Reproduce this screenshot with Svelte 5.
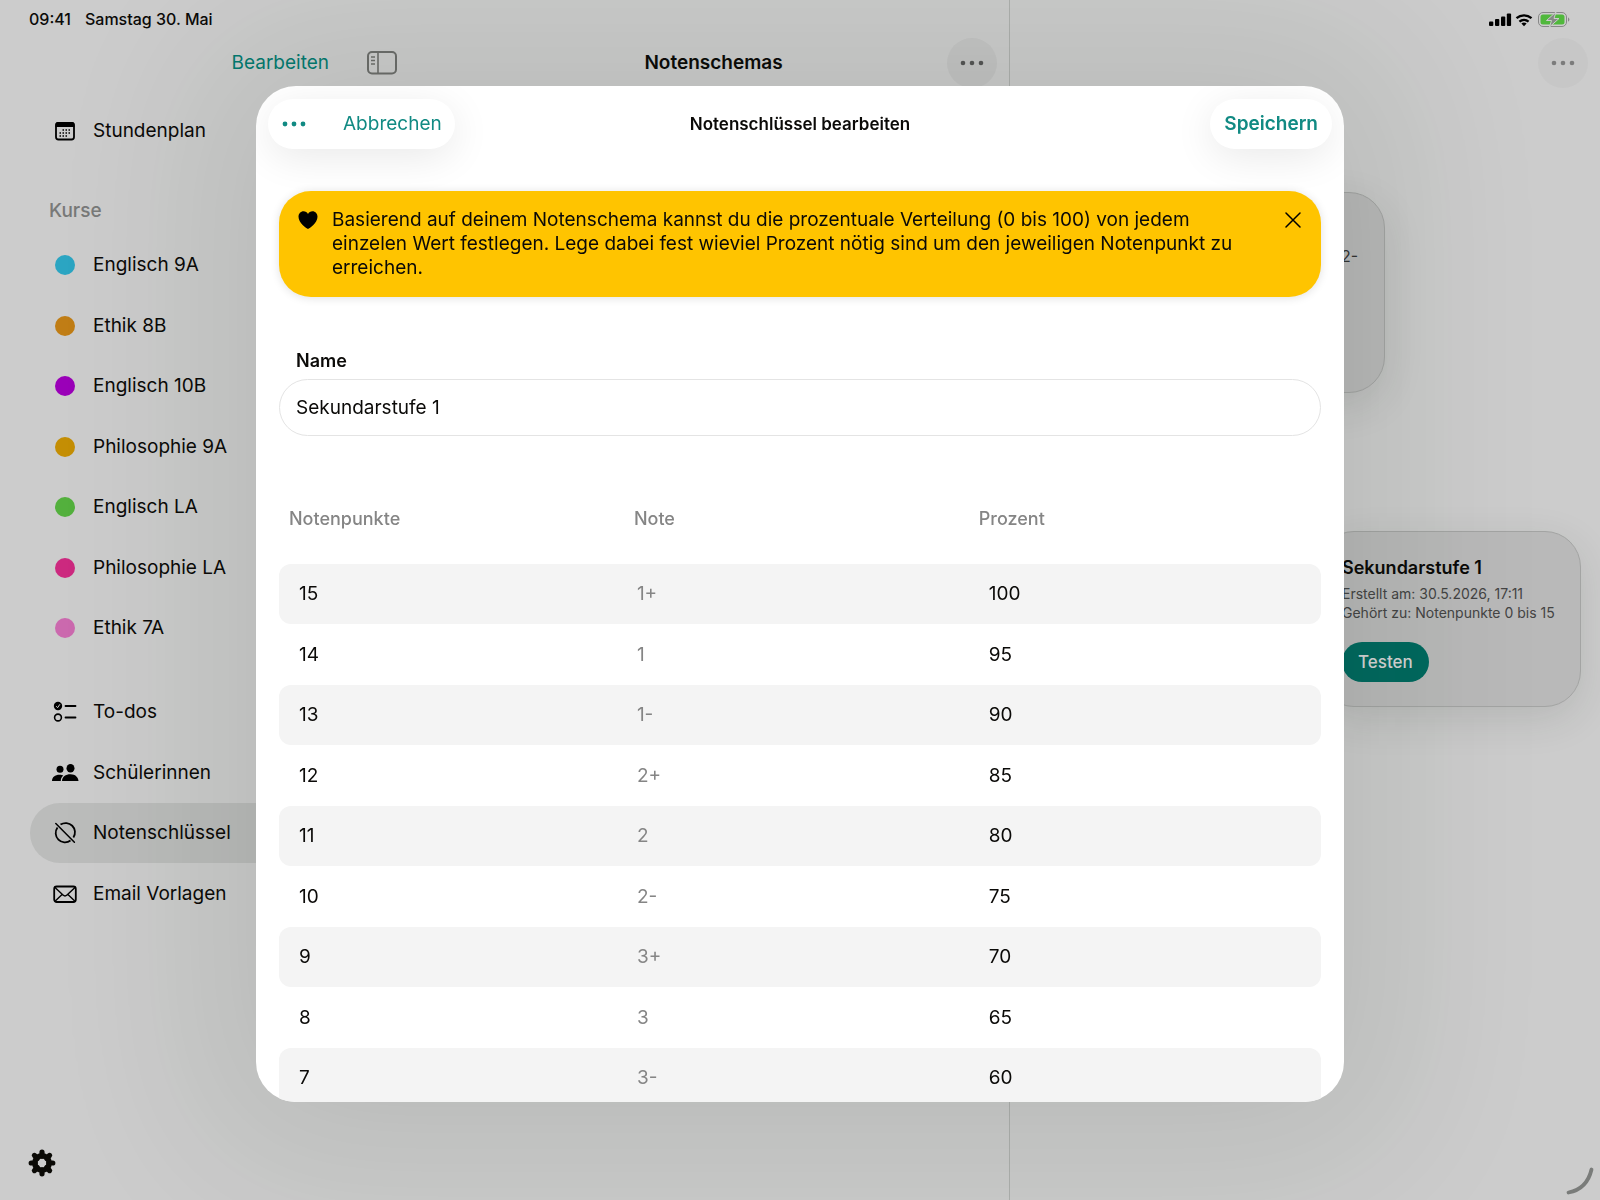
<script>
  let name = "Sekundarstufe 1";
  let showHint = true;
  let selected = "Notenschlüssel";

  const courses = [
    { title: "Englisch 9A", color: "#2ba5c2" },
    { title: "Ethik 8B", color: "#c07d15" },
    { title: "Englisch 10B", color: "#9a00b8" },
    { title: "Philosophie 9A", color: "#c48e04" },
    { title: "Englisch LA", color: "#53b03d" },
    { title: "Philosophie LA", color: "#cc297f" },
    { title: "Ethik 7A", color: "#cb69ae" },
  ];

  const links = [
    { title: "To-dos", icon: "todo" },
    { title: "Schülerinnen", icon: "people" },
    { title: "Notenschlüssel", icon: "key" },
    { title: "Email Vorlagen", icon: "mail" },
  ];

  const grades = [
    { points: 15, grade: "1+", percent: 100 },
    { points: 14, grade: "1", percent: 95 },
    { points: 13, grade: "1-", percent: 90 },
    { points: 12, grade: "2+", percent: 85 },
    { points: 11, grade: "2", percent: 80 },
    { points: 10, grade: "2-", percent: 75 },
    { points: 9, grade: "3+", percent: 70 },
    { points: 8, grade: "3", percent: 65 },
    { points: 7, grade: "3-", percent: 60 },
  ];
</script>

<div class="screen">
  <div class="status">
    <span>09:41</span>
    <span>Samstag 30. Mai</span>
    <svg class="status-icons" width="84" height="18" viewBox="0 0 84 18">
      <rect x="1" y="11.500" width="4.300" height="4.500" rx="1" />
      <rect x="7" y="9" width="4.300" height="7" rx="1" />
      <rect x="13" y="6.500" width="4.300" height="9.500" rx="1" />
      <rect x="18.800" y="3.500" width="4.300" height="12.500" rx="1" />
      <path
        d="M28.500 8.200a11.500 11.500 0 0 1 15 0M31.400 11.600a7.200 7.200 0 0 1 9.200 0"
        fill="none"
        stroke="#000"
        stroke-width="2.300"
      />
      <path d="M36 16.300l-2.600-2.700a4 4 0 0 1 5.200 0z" />
      <rect
        x="50.500"
        y="2.500"
        width="28"
        height="14"
        rx="4.500"
        fill="none"
        stroke="#878787"
      />
      <rect x="52.500" y="4.500" width="24" height="10" rx="2.500" fill="#50b83c" />
      <path d="M80.300 7.200q2 2.300 0 4.600z" fill="#666" />
      <path
        d="M68 2l-9.500 8.500h5l-2 6.500 9.500-8.500h-5z"
        fill="#858a85"
        stroke="#ccc"
        stroke-width="1"
      />
    </svg>
  </div>

  <aside class="sidebar">
    <div class="sidebar-top">
      <button class="text-btn">Bearbeiten</button>
      <button class="icon-btn" aria-label="Seitenleiste">
        <svg width="30" height="24" viewBox="0 0 30 24" fill="none" stroke="#6c6d6b">
          <rect x="1" y="1" width="28" height="21.500" rx="4" stroke-width="2" />
          <path d="M11 1v21" stroke-width="1.600" />
          <path d="M4 6h4M4 9.500h4M4 13h4" stroke-width="1.500" />
        </svg>
      </button>
    </div>
    <nav>
      <ul>
        <li>
          <a href="#stundenplan">
            <svg class="icon" viewBox="0 0 24 24">
              <rect
                x="3"
                y="4"
                width="18"
                height="16.500"
                rx="2.500"
                fill="none"
                stroke="#000"
                stroke-width="1.800"
              />
              <path d="M2.500 8V5.500a2.500 2.500 0 0 1 2.500-2.500h14a2.500 2.500 0 0 1 2.500 2.500V8z" />
              <path
                d="M9.500 11h9M6.500 14h12M6.500 17h9"
                stroke="#000"
                stroke-width="1.500"
                stroke-dasharray="1.500 1.500"
              />
            </svg>
            Stundenplan
          </a>
        </li>
      </ul>
      <h2>Kurse</h2>
      <ul>
        {#each courses as course}
          <li>
            <a href="#kurse">
              <span class="icon">
                <span class="dot" style="background: {course.color}"></span>
              </span>
              {course.title}
            </a>
          </li>
        {/each}
      </ul>
      <ul class="links">
        {#each links as link}
          <li>
            <a
              href="#bereich"
              class={link.title == selected ? "active" : ""}
              on:click={() => (selected = link.title)}
            >
              {#if link.icon == "todo"}
                <svg class="icon" viewBox="0 0 24 24" fill="none" stroke="#000">
                  <circle cx="5" cy="6" r="4.200" fill="#000" stroke="none" />
                  <path d="M3.200 6.200l1.400 1.500 2.300-3.400" stroke="#ccc" />
                  <circle cx="5" cy="17.500" r="3.400" stroke-width="1.600" />
                  <path d="M12.500 6h10M12.500 17.500h10" stroke-width="1.800" stroke-linecap="round" />
                </svg>
              {:else if link.icon == "people"}
                <svg class="icon people" viewBox="0 0 28 24">
                  <circle cx="9" cy="8.300" r="3.500" />
                  <path d="M1 20c0-4 3-6.300 7.500-6.300 1.700 0 2.800.300 3.800.800-1.800 1.400-2.500 3.200-2.500 5.500z" />
                  <ellipse cx="19.500" cy="7.300" rx="4" ry="4.300" />
                  <path d="M11 20c0-4.200 3.600-6.800 8.500-6.800s7.500 2.800 8 6.800z" />
                </svg>
              {:else if link.icon == "key"}
                <svg class="icon" viewBox="0 0 24 24" fill="none" stroke="#000" stroke-width="1.800">
                  <path d="M7.500 3.600A9.300 9.300 0 0 1 20.400 16.500M17.500 19.500A9.300 9.300 0 0 1 4.500 6.500" />
                  <path d="M2.800 2.500l18.600 18.800" stroke-width="1.500" stroke-linecap="round" />
                </svg>
              {:else}
                <svg class="icon" viewBox="0 0 24 24" fill="none" stroke="#000" stroke-width="1.800">
                  <rect x="1.200" y="4.500" width="21.600" height="15.500" rx="2.500" />
                  <path
                    d="M2 5.500l8 7.500q2 1.800 4 0l8-7.500M2 19.300l6.800-6.500M22 19.300l-6.800-6.500"
                    stroke-width="1.400"
                  />
                </svg>
              {/if}
              {link.title}
            </a>
          </li>
        {/each}
      </ul>
    </nav>
    <button class="icon-btn gear" aria-label="Einstellungen">
      <svg width="28" height="28" viewBox="0 0 28 28">
        <g stroke="#0b0a06" stroke-width="5.200" stroke-linecap="round">
          <path d="M14 3.200v4M14 20.800v4M3.200 14h4M20.800 14h4" />
          <path d="M6.400 6.400l3 3M18.600 18.600l3 3M21.600 6.400l-3 3M9.400 18.600l-3 3" />
        </g>
        <circle cx="14" cy="14" r="7.200" fill="none" stroke="#0b0a06" stroke-width="5.500" />
      </svg>
    </button>
  </aside>

  <section class="schemas">
    <h1>Notenschemas</h1>
    <button class="more" aria-label="Mehr">
      <svg width="26" height="8" viewBox="0 0 26 8">
        <circle cx="4" cy="4" r="2.300" />
        <circle cx="13" cy="4" r="2.300" />
        <circle cx="22" cy="4" r="2.300" />
      </svg>
    </button>
  </section>

  <section class="detail">
    <button class="more more-dim" aria-label="Mehr">
      <svg width="26" height="8" viewBox="0 0 26 8">
        <circle cx="4" cy="4" r="2.300" />
        <circle cx="13" cy="4" r="2.300" />
        <circle cx="22" cy="4" r="2.300" />
      </svg>
    </button>
    <article class="card scheme-card">2-</article>
    <article class="card key-card">
      <h3>Sekundarstufe 1</h3>
      <p>Erstellt am: 30.5.2026, 17:11</p>
      <p>Gehört zu: Notenpunkte 0 bis 15</p>
      <button class="test-btn">Testen</button>
    </article>
  </section>

  <svg class="corner" width="28" height="28" viewBox="0 0 28 28">
    <path
      d="M2.500 25.500Q21 22 25.500 2.500"
      fill="none"
      stroke="#7a7c7a"
      stroke-width="3.800"
      stroke-linecap="round"
    />
  </svg>
</div>

<div class="overlay">
  <div class="modal" role="dialog" aria-labelledby="modal-title">
    <header>
      <div class="pill">
        <button class="icon-btn dots" aria-label="Mehr">
          <svg width="26" height="8" viewBox="0 0 26 8">
            <circle cx="4" cy="4" r="2.400" />
            <circle cx="13" cy="4" r="2.400" />
            <circle cx="22" cy="4" r="2.400" />
          </svg>
        </button>
        <button class="text-btn">Abbrechen</button>
      </div>
      <h2 id="modal-title">Notenschlüssel bearbeiten</h2>
      <div class="pill pill-right">
        <button class="text-btn save">Speichern</button>
      </div>
    </header>

    {#if showHint}
      <div class="hint">
        <svg width="20" height="20" viewBox="0 0 20 20">
          <path
            d="M10 19C8.500 18.500 .500 13 .500 6.800.500 3.500 2.700 1.200 5.500 1.200c2 0 3.600 1 4.500 2.700.900-1.700 2.500-2.700 4.500-2.700 2.800 0 5 2.300 5 5.600C19.500 13 11.500 18.500 10 19z"
          />
        </svg>
        <p>
          Basierend auf deinem Notenschema kannst du die prozentuale Verteilung
          (0 bis 100) von jedem einzelen Wert festlegen. Lege dabei fest wieviel
          Prozent nötig sind um den jeweiligen Notenpunkt zu erreichen.
        </p>
        <button
          class="icon-btn"
          aria-label="Schließen"
          on:click={() => (showHint = false)}
        >
          <svg width="16" height="16" viewBox="0 0 16 16">
            <path
              d="M1 1l14 14M15 1L1 15"
              stroke="#000"
              stroke-width="1.500"
              stroke-linecap="round"
            />
          </svg>
        </button>
      </div>
    {/if}

    <div class="field">
      <label for="name">Name</label>
      <input id="name" type="text" bind:value={name} />
    </div>

    <table>
      <thead>
        <tr>
          <th>Notenpunkte</th>
          <th>Note</th>
          <th>Prozent</th>
        </tr>
      </thead>
      <tbody>
        {#each grades as row}
          <tr>
            <td>{row.points}</td>
            <td class="grade">{row.grade}</td>
            <td>{row.percent}</td>
          </tr>
        {/each}
      </tbody>
    </table>
  </div>
</div>

<style>
  :global(body) {
    margin: 0;
    background: #ccc;
    color: #0b0a08;
    font-family: Inter, "Liberation Sans", sans-serif;
    font-size: 19px;
    line-height: 24px;
  }
  h1,
  h2,
  h3,
  p,
  ul {
    margin: 0;
    padding: 0;
  }
  ul {
    list-style: none;
  }
  button {
    padding: 0;
    border: none;
    background: none;
    font: inherit;
    cursor: pointer;
  }
  svg {
    display: block;
  }
  .screen {
    position: relative;
    display: grid;
    grid-template-columns: 418px 1fr 590px;
    min-height: 100vh;
    overflow: hidden;
  }
  .status {
    position: absolute;
    top: 7px;
    left: 29px;
    right: 28px;
    display: flex;
    align-items: center;
    gap: 14px;
    font-size: 16px;
    font-weight: 500;
  }
  .status-icons {
    margin-left: auto;
  }
  .text-btn {
    color: #047a70;
  }
  .sidebar {
    display: flex;
    flex-direction: column;
    box-sizing: border-box;
    margin: 38px 5px 12px 12px;
    padding-bottom: 11px;
  }
  .sidebar-top {
    display: flex;
    align-items: center;
    justify-content: flex-end;
    gap: 38px;
    height: 50px;
    padding-right: 16px;
    margin-bottom: 13px;
  }
  nav {
    padding-left: 18px;
  }
  nav a {
    display: flex;
    align-items: center;
    gap: 16px;
    height: 60px;
    padding-left: 23px;
    border-radius: 30px;
    color: inherit;
    text-decoration: none;
  }
  nav li:nth-child(even) a {
    height: 61px;
  }
  nav a.active {
    background: rgba(40, 50, 40, 0.1);
  }
  nav h2 {
    margin: 38px 0 12px 19px;
    color: #787978;
    font-size: 19px;
    font-weight: 500;
  }
  .icon {
    display: flex;
    align-items: center;
    justify-content: center;
    width: 24px;
    height: 24px;
  }
  .people {
    width: 28px;
    margin: 0 -2px;
  }
  .dot {
    width: 20px;
    height: 20px;
    border-radius: 50%;
  }
  .links {
    margin-top: 24px;
  }
  .gear {
    align-self: flex-start;
    margin: auto 0 0 16px;
  }
  .schemas {
    display: grid;
    grid-template-columns: 1fr auto 1fr;
    align-items: center;
    align-content: start;
    padding: 38px 12px 0;
    border-right: 1px solid #aeb0ae;
  }
  h1 {
    grid-column: 2;
    font-size: 19px;
    font-weight: 600;
  }
  .more {
    display: flex;
    align-items: center;
    justify-content: center;
    justify-self: end;
    width: 50px;
    height: 50px;
    border-radius: 50%;
    background: rgba(60, 60, 50, 0.05);
    fill: #555;
  }
  .more-dim {
    background: rgba(60, 60, 50, 0.03);
    fill: #7c7c7c;
  }
  .detail {
    display: flex;
    flex-direction: column;
    align-items: flex-end;
    padding: 38px 12px 0;
  }
  .card {
    box-sizing: border-box;
    border: 1px solid #a3a4a3;
    border-radius: 36px;
    background: #b9b9b9;
    box-shadow: 0 12px 40px rgba(30, 40, 30, 0.12);
  }
  .scheme-card {
    width: 262px;
    height: 201px;
    margin: 104px 203px 0 0;
    padding: 51px 26px;
    font-size: 16px;
    text-align: right;
    color: #333;
  }
  .key-card {
    width: 263px;
    margin: 138px 7px 0 0;
    padding: 24px 23px;
    font-size: 14px;
    line-height: 19px;
    color: #444;
  }
  .key-card h3 {
    margin-bottom: 4px;
    color: #0b0a08;
    font-size: 18px;
    font-weight: 600;
    line-height: 24px;
  }
  .key-card p {
    white-space: nowrap;
  }
  .test-btn {
    height: 40px;
    margin-top: 20px;
    padding: 0 16px;
    border-radius: 20px;
    background: #00695f;
    color: #d4d4d4;
    font-size: 17px;
    font-weight: 500;
  }
  .corner {
    position: absolute;
    right: 6px;
    bottom: 5px;
  }
  .overlay {
    position: fixed;
    inset: 0;
    display: flex;
    justify-content: center;
    box-sizing: border-box;
    padding: 86px 24px 98px;
    overflow: hidden;
  }
  .modal {
    width: 100%;
    max-width: 1088px;
    overflow: hidden;
    border-radius: 40px;
    background: #fff;
    box-shadow: 0 4px 160px 50px rgba(20, 40, 20, 0.1);
  }
  header {
    display: grid;
    grid-template-columns: 1fr auto 1fr;
    align-items: center;
    padding: 13px 12px 0;
    margin-bottom: 42px;
  }
  header h2 {
    font-size: 17px;
    font-weight: 600;
  }
  .pill {
    display: flex;
    align-items: center;
    justify-self: start;
    gap: 36px;
    height: 50px;
    padding: 0 13px;
    border-radius: 25px;
    background: #fff;
    box-shadow: 0 8px 40px rgba(0, 0, 0, 0.09);
  }
  .pill .text-btn {
    color: #118a83;
  }
  .pill .save {
    font-weight: 600;
  }
  .pill-right {
    justify-self: end;
    padding: 0 14px;
  }
  .dots {
    fill: #118a83;
  }
  .hint {
    display: flex;
    align-items: flex-start;
    gap: 14px;
    margin: 0 23px;
    padding: 17px 20px 17px 19px;
    border-radius: 32px;
    background: #ffc400;
    box-shadow: 0 1px 10px rgba(0, 0, 0, 0.12);
  }
  .hint svg {
    margin-top: 2px;
  }
  .hint p {
    flex: 1;
    padding-right: 24px;
  }
  .hint .icon-btn svg {
    margin-top: 4px;
  }
  .field {
    display: flex;
    flex-direction: column;
    gap: 6px;
    margin: 52px 23px 0;
  }
  label {
    padding-left: 17px;
    font-size: 18px;
    font-weight: 600;
  }
  input {
    box-sizing: border-box;
    width: 100%;
    height: 57px;
    padding: 0 16px;
    border: 1px solid #e4e4e4;
    border-radius: 29px;
    outline: none;
    background: #fff;
    color: inherit;
    font: inherit;
  }
  table {
    width: calc(100% - 46px);
    margin: 56px 23px 0;
    border-spacing: 0;
    table-layout: fixed;
  }
  th {
    box-sizing: border-box;
    width: 33.1%;
    height: 72px;
    padding: 0 10px 18px;
    color: #858585;
    font-size: 18px;
    font-weight: 500;
    text-align: left;
    vertical-align: middle;
  }
  th:last-child {
    width: 33.8%;
  }
  td {
    box-sizing: border-box;
    height: 61px;
    padding: 0 20px;
  }
  tbody tr:nth-child(odd) td {
    height: 60px;
    background: #f4f4f4;
  }
  td:first-child {
    border-radius: 12px 0 0 12px;
  }
  td:last-child {
    border-radius: 0 12px 12px 0;
  }
  .grade {
    padding: 0 13px;
    color: #858585;
  }
</style>
